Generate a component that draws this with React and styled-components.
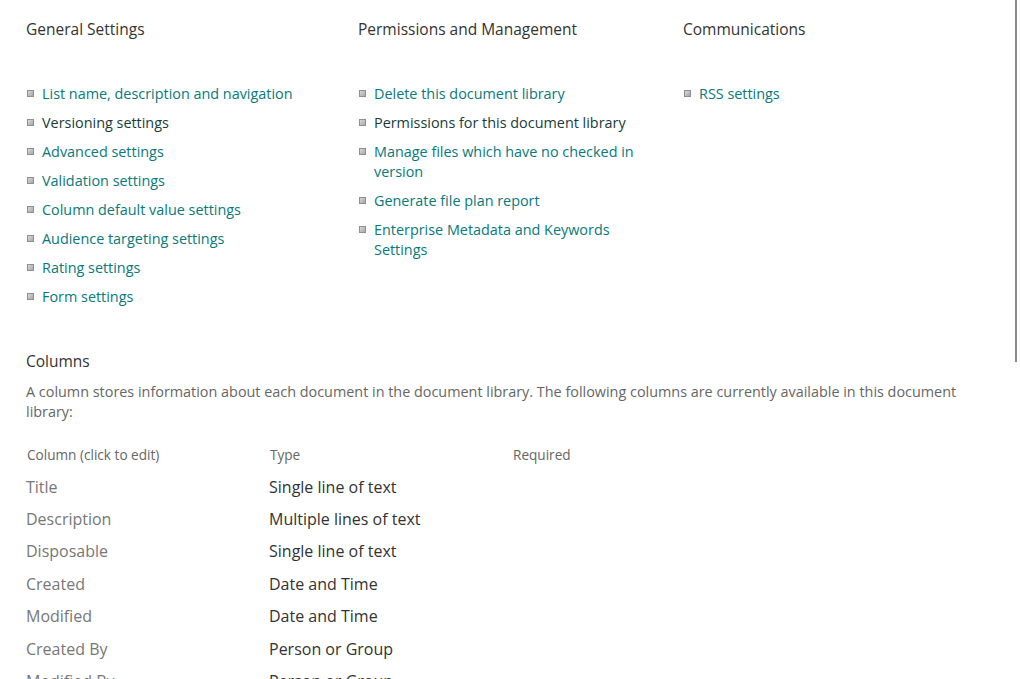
import React from "react";
import styled, { createGlobalStyle } from "styled-components";

const Global = createGlobalStyle`
  html, body { margin: 0; padding: 0; background: #fff; overflow: hidden; }
  body { font-family: "Open Sans", "Noto Sans", sans-serif; color: #333; }
`;

const Page = styled.div`
  width: 1020px;
  height: 679px;
  box-sizing: border-box;
  padding: 18px 40px 0 26px;
  overflow: hidden;
`;

const SettingsGrid = styled.div`
  display: grid;
  grid-template-columns: 332px 325px 1fr;
`;

const Group = styled.section`
  display: flex;
  flex-direction: column;
`;

const GroupTitle = styled.h2`
  margin: 0;
  font-size: 15.5px;
  font-weight: 400;
  line-height: 22px;
  color: #333;
`;

const LinkList = styled.ul`
  list-style: none;
  margin: 44px 0 0;
  padding: 0;
  display: flex;
  flex-direction: column;
  gap: 9px;
  width: 300px;
`;

const LinkItem = styled.li`
  display: flex;
  align-items: flex-start;
  gap: 8px;
  font-size: 14.4px;
  line-height: 20px;
  color: ${(p) => (p.$visited ? "#173c3c" : "#08797c")};
`;

const Bullet = styled.span`
  flex: none;
  width: 5px;
  height: 5px;
  margin-top: 6px;
  margin-left: 1px;
  border: 1px solid #8f8f8f;
  background: linear-gradient(135deg, #d8d8d8, #a8a8a8);
`;

const SectionTitle = styled(GroupTitle)`
  margin-top: 43px;
`;

const Description = styled.p`
  margin: 10px 0 0;
  font-size: 14.4px;
  line-height: 20px;
  color: #666;
`;

const Table = styled.div`
  margin-top: 16px;
  display: grid;
  grid-template-columns: 243px 243px 1fr;
  grid-auto-rows: 32.4px;
  align-items: center;
`;

const HeadCell = styled.div`
  font-size: 13.6px;
  color: #666;
  padding-left: 1px;
`;

const NameCell = styled.div`
  font-size: 16px;
  color: #777;
  white-space: nowrap;
`;

const TypeCell = styled.div`
  font-size: 16px;
  color: #333;
  white-space: nowrap;
`;

const Scrollbar = styled.div`
  position: fixed;
  top: 0;
  right: 3px;
  width: 2px;
  height: 362px;
  background: #8a8a8a;
`;

const groups = [
  {
    title: "General Settings",
    links: [
      ["List name, description and navigation"],
      ["Versioning settings", true],
      ["Advanced settings"],
      ["Validation settings"],
      ["Column default value settings"],
      ["Audience targeting settings"],
      ["Rating settings"],
      ["Form settings"],
    ],
  },
  {
    title: "Permissions and Management",
    links: [
      ["Delete this document library"],
      ["Permissions for this document library", true],
      ["Manage files which have no checked in version"],
      ["Generate file plan report"],
      ["Enterprise Metadata and Keywords Settings"],
    ],
  },
  {
    title: "Communications",
    links: [["RSS settings"]],
  },
];

const columns = [
  ["Title", "Single line of text"],
  ["Description", "Multiple lines of text"],
  ["Disposable", "Single line of text"],
  ["Created", "Date and Time"],
  ["Modified", "Date and Time"],
  ["Created By", "Person or Group"],
  ["Modified By", "Person or Group"],
];

export default function App() {
  return (
    <Page>
      <Global />
      <SettingsGrid>
        {groups.map((g) => (
          <Group key={g.title}>
            <GroupTitle>{g.title}</GroupTitle>
            <LinkList>
              {g.links.map(([label, visited]) => (
                <LinkItem key={label} $visited={visited}>
                  <Bullet />
                  <span>{label}</span>
                </LinkItem>
              ))}
            </LinkList>
          </Group>
        ))}
      </SettingsGrid>
      <SectionTitle>Columns</SectionTitle>
      <Description>
        A column stores information about each document in the document library. The following
        columns are currently available in this document library:
      </Description>
      <Table>
        <HeadCell>Column (click to edit)</HeadCell>
        <HeadCell>Type</HeadCell>
        <HeadCell>Required</HeadCell>
        {columns.map(([name, type]) => (
          <React.Fragment key={name}>
            <NameCell>{name}</NameCell>
            <TypeCell>{type}</TypeCell>
            <div />
          </React.Fragment>
        ))}
      </Table>
      <Scrollbar />
    </Page>
  );
}
